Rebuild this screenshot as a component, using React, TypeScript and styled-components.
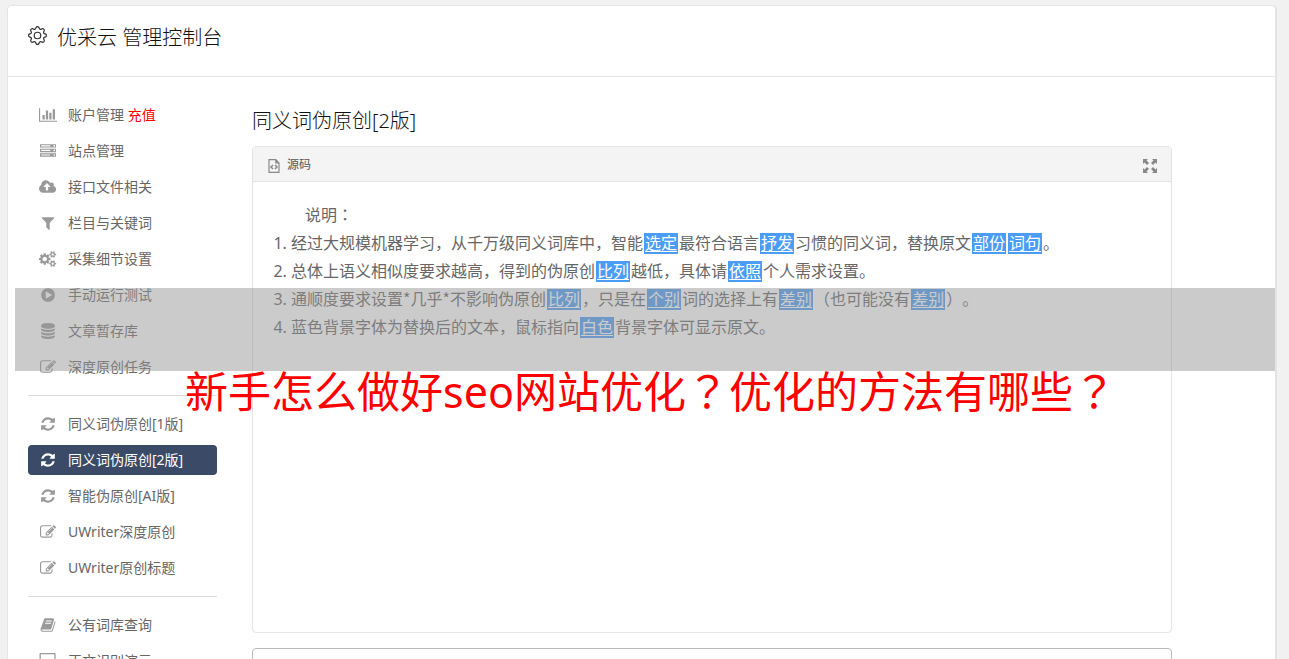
import React from "react";
import styled, { createGlobalStyle } from "styled-components";
import { BsGear } from "react-icons/bs";

const GlobalStyle = createGlobalStyle`
  * { box-sizing: border-box; }
  body {
    margin: 0;
    background: #f1f1f1;
    color: #666;
    font-family: "Noto Sans", "Noto Sans CJK SC", sans-serif;
    font-size: 14px;
    text-spacing-trim: space-all;
  }
`;

const Page = styled.div`
  position: relative;
  height: 100vh;
  overflow: hidden;
  padding: 5px 12px 0 7px;
`;

const Panel = styled.div`
  min-height: 100vh;
  background: #fff;
  border: 1px solid #e4e4e4;
  border-right-width: 2px;
  border-radius: 5px;
`;

const TopBar = styled.header`
  display: flex;
  align-items: flex-start;
  gap: 10px;
  height: 71px;
  padding: 18px 20px;
  border-bottom: 1px solid #e4e4e4;
  color: #333;

  svg {
    margin-top: 2px;
  }
`;

const Brand = styled.h1`
  margin: 0;
  font-size: 20px;
  line-height: 28px;
  font-weight: 300;
  color: #111;
`;

const Body = styled.div`
  display: flex;
  gap: 35px;
  padding: 23px 20px;
`;

const Sidebar = styled.nav`
  flex: 0 0 189px;
`;

const NavList = styled.ul`
  list-style: none;
  margin: 0;
  padding: 0;
  display: grid;
  gap: 6px;

  & + & {
    margin-top: 13px;
    padding-top: 13px;
    border-top: 1px solid #ddd;
  }
`;

const NavLink = styled.a<{ $active?: boolean }>`
  display: flex;
  height: 30px;
  line-height: 30px;
  border-radius: 4px;
  text-decoration: none;
  white-space: pre;
  color: ${(p) => (p.$active ? "#fff" : "#666")};
  background: ${(p) => (p.$active ? "#3b4a66" : "transparent")};

  svg {
    color: ${(p) => (p.$active ? "#fff" : "#999")};
  }
`;

const IconSlot = styled.span`
  display: flex;
  justify-content: center;
  align-items: center;
  width: 40px;
`;

const Recharge = styled.span`
  color: #f00;
`;

const Main = styled.main`
  flex: 1;
  min-width: 0;
  max-width: 920px;
`;

const Title = styled.h2`
  margin: 7px 0 11px;
  font-size: 20px;
  line-height: 28px;
  font-weight: 300;
  color: #111;
`;

const Editor = styled.section`
  height: 487px;
  border: 1px solid #e4e4e4;
  border-radius: 4px;
`;

const Toolbar = styled.div`
  display: flex;
  justify-content: space-between;
  align-items: center;
  height: 35px;
  padding: 0 14px;
  background: #f4f4f4;
  border-bottom: 1px solid #e4e4e4;
`;

const ToolButton = styled.button`
  display: flex;
  align-items: center;
  gap: 6px;
  padding: 0;
  border: 0;
  background: none;
  font: inherit;
  font-size: 12px;
  color: #555;

  svg {
    margin-top: 4px;
    color: #888;
  }
`;

const Content = styled.div`
  padding: 19px 20px;
  font-size: 16px;
  line-height: 28px;
`;

const Lead = styled.p`
  margin: 0;
  text-indent: 2em;
`;

const Rules = styled.ol`
  margin: 0;
  padding-left: 18px;
`;

const Swap = styled.span`
  display: inline-block;
  margin: 0 1px;
  padding: 0 1px;
  line-height: 21px;
  background: #4a9cf5;
  color: #fff;
  text-decoration: underline;
  text-decoration-thickness: 1px;
  text-underline-offset: 2px;
`;

/* Punctuation that sits in the middle of its full-width cell. */
const Centred = styled.span.attrs({ lang: "zh-TW" })`
  font-family: "Noto Sans CJK TC", sans-serif;
  line-height: 1;
`;

const ResultBox = styled.textarea`
  display: block;
  width: 100%;
  height: 120px;
  margin-top: 15px;
  border: 1px solid #bbb;
  border-radius: 4px;
  resize: none;
`;

const Band = styled.div`
  position: absolute;
  top: 288px;
  left: 15px;
  right: 14px;
  height: 83px;
  background: rgba(148, 148, 148, 0.49);
`;

const Headline = styled.p`
  position: absolute;
  top: 360px;
  left: 0;
  right: 0;
  margin: 0;
  padding-left: 12px;
  text-align: center;
  white-space: nowrap;
  font-size: 43px;
  line-height: 64px;
  color: #f00;
`;

const smallCog =
  "v140q0 16-149 31-12 27-30 52 51 113 51 138 0 4-4 7-122 71-124 71-8 0-46-47t-52-68q-20 2-30 2t-30-2q-14 21-52 68t-46 47q-2 0-124-71-4-3-4-7 0-25 51-138-18-25-30-52-149-15-149-31v-140q0-16 149-31 13-29 30-52-51-113-51-138 0-4 4-7 4-2 35-20t59-34 30-16q8 0 46 46.5t52 67.5q20-2 30-2t30 2q51-71 92-112l6-2q4 0 124 70 4 3 4 7 0 25-51 138 17 23 30 52 149 15 149 31z";
const led = "q0-40-28-68t-68-28-68 28-28 68 28 68 68 28 68-28 28-68z";
const disk =
  "q237 0 443-43t325-127v170q0 69-103 128t-280 93.5-385 34.5-385-34.5-280-93.5-103-128v-170q119 84 325 127t443 43z";

type Glyph = { x?: number; w?: number; d: string };

const glyphs: Record<string, Glyph> = {
  chart: {
    w: 2048,
    d: "M640 896v512h-256v-512h256zm384-512v1024h-256v-1024h256zm1024 1152v128h-2048v-1536h128v1408h1920zm-640-896v768h-256v-768h256zm384-384v1152h-256v-1152h256z",
  },
  server: {
    d: `M128 1408h1024v-128h-1024v128zM128 896h1024v-128h-1024v128zM1696 1344${led}M128 384h1024v-128h-1024v128zM1696 832${led}M1696 320${led}M1792 1152v384h-1792v-384h1792zM1792 640v384h-1792v-384h1792zM1792 128v384h-1792v-384h1792z`,
  },
  upload: {
    x: -64,
    w: 1920,
    d: "M1216 864q0-14-9-23l-352-352q-9-9-23-9t-23 9l-351 351q-10 12-10 24 0 14 9 23t23 9h224v352q0 13 9.5 22.5t22.5 9.5h192q13 0 22.5-9.5t9.5-22.5v-352h224q13 0 22.5-9.5t9.5-22.5zm640 288q0 159-112.5 271.5t-271.5 112.5h-1088q-185 0-316.5-131.5t-131.5-316.5q0-130 70-240t188-165q-2-30-2-43 0-212 150-362t362-150q156 0 285.5 87t188.5 231q71-62 166-62 106 0 181 75t75 181q0 76-41 138 130 31 213.5 135.5t83.5 238.5z",
  },
  filter: {
    d: "M1595 295q17 41-14 70l-493 493v742q0 42-39 59-13 5-25 5-27 0-45-19l-256-256q-19-19-19-45v-486l-493-493q-31-29-14-70 17-39 59-39h1280q42 0 59 39z",
  },
  cogs: {
    x: -64,
    w: 1920,
    d: `M832 896q0-106-75-181t-181-75-181 75-75 181 75 181 181 75 181-75 75-181zm768 512q0-52-38-90t-90-38-90 38-38 90q0 53 37.5 90.5t90.5 37.5 90.5-37.5 37.5-90.5zm0-1024q0-52-38-90t-90-38-90 38-38 90q0 53 37.5 90.5t90.5 37.5 90.5-37.5 37.5-90.5zm-384 421v185q0 10-7 19.5t-16 10.5l-155 24q-11 35-32 76 34 48 90 115 7 11 7 20 0 12-7 19-23 30-82.5 89.5t-78.5 59.5q-11 0-21-7l-115-90q-37 19-77 31-11 108-23 155-7 24-30 24h-186q-11 0-20-7.5t-10-17.5l-23-153q-34-10-75-31l-118 89q-7 7-20 7-11 0-21-8-144-133-144-160 0-9 7-19 10-14 41-53t47-61q-23-44-35-82l-152-24q-10-1-17-9.5t-7-19.5v-185q0-10 7-19.5t16-10.5l155-24q11-35 32-76-34-48-90-115-7-11-7-20 0-12 7-20 22-30 82-89t79-59q11 0 21 7l115 90q34-18 77-32 11-108 23-154 7-24 30-24h186q11 0 20 7.5t10 17.5l23 153q34 10 75 31l118-89q8-7 20-7 11 0 21 8 144 133 144 160 0 8-7 19-12 16-42 54t-45 60q23 48 34 82l152 23q10 2 17 10.5t7 19.5zM1856 1338${smallCog}M1856 314${smallCog}`,
  },
  play: {
    d: "M896 128q209 0 385.5 103t279.5 279.5 103 385.5-103 385.5-279.5 279.5-385.5 103-385.5-103-279.5-279.5-103-385.5 103-385.5 279.5-279.5 385.5-103zm384 823q32-18 32-55t-32-55l-544-320q-31-19-64-1-32 19-32 56v640q0 37 32 56 16 8 32 8 17 0 32-9z",
  },
  database: {
    d: `M896 768${disk}M896 1536${disk}M896 1152${disk}M896 0q208 0 385 34.5t280 93.5 103 128v128q0 69-103 128t-280 93.5-385 34.5-385-34.5-280-93.5-103-128v-128q0-69 103-128t280-93.5 385-34.5z`,
  },
  edit: {
    d: "M888 1184l116-116-152-152-116 116v56h96v96h56zm440-720q-16-16-33 1l-350 350q-17 17-1 33t33-1l350-350q17-17 1-33zm80 594v190q0 119-84.5 203.5t-203.5 84.5h-832q-119 0-203.5-84.5t-84.5-203.5v-832q0-119 84.5-203.5t203.5-84.5h832q63 0 117 25 15 7 18 23 3 17-9 29l-49 49q-14 14-32 8-23-6-45-6h-832q-66 0-113 47t-47 113v832q0 66 47 113t113 47h832q66 0 113-47t47-113v-126q0-13 9-22l64-64q15-15 35-7t20 29zm-96-738l288 288-672 672h-288v-288zm444 132l-92 92-288-288 92-92q28-28 68-28t68 28l152 152q28 28 28 68t-28 68z",
  },
  refresh: {
    d: "M1639 1056q0 5-1 7-64 268-268 434.5t-478 166.5q-146 0-282.5-55t-243.5-157l-129 129q-19 19-45 19t-45-19-19-45v-448q0-26 19-45t45-19h448q26 0 45 19t19 45-19 45l-137 137q71 66 161 102t187 36q134 0 250-65t186-179q11-17 53-117 8-23 30-23h192q13 0 22.5 9.5t9.5 22.5zm25-800v448q0 26-19 45t-45 19h-448q-26 0-45-19t-19-45 19-45l138-138q-148-137-349-137-134 0-250 65t-186 179q-11 17-53 117-8 23-30 23h-199q-13 0-22.5-9.5t-9.5-22.5v-7q65-268 270-434.5t480-166.5q146 0 284 55.5t245 156.5l130-129q19-19 45-19t45 19 19 45z",
  },
  book: {
    d: "M1703 478q40 57 18 129l-275 906q-19 64-76.5 107.5t-122.5 43.5h-923q-77 0-148.5-53.5t-99.5-131.5q-24-67-2-127 0-4 3-27t4-37q1-8-3-21.5t-3-19.5q2-11 8-21t16.5-23.5 16.5-23.5q23-38 45-91.5t30-91.5q3-10 .5-30t-.5-28q3-11 17-28t17-23q21-36 42-92t25-90q1-9-2.5-32t.5-28q4-13 22-30.5t22-22.5q19-26 42.5-84.5t27.5-96.5q1-8-3-25.5t-2-26.5q2-8 9-18t18-23 17-21q8-12 16.5-30.5t15-35 16-36 19.5-32 26.5-23.5 36-11.5 47.5 5.5l-1 3q38-9 51-9h761q74 0 114 56t18 130l-274 906q-36 119-71.5 153.5t-128.5 34.5h-869q-27 0-38 15-11 16-1 43 24 70 144 70h923q29 0 56-15.5t35-41.5l300-987q7-22 5-57 38 15 59 43zm-1064 2q-4 13 2 22.5t20 9.5h608q13 0 25.5-9.5t16.5-22.5l21-64q4-13-2-22.5t-20-9.5h-608q-13 0-25.5 9.5t-16.5 22.5zm-83 256q-4 13 2 22.5t20 9.5h608q13 0 25.5-9.5t16.5-22.5l21-64q4-13-2-22.5t-20-9.5h-608q-13 0-25.5 9.5t-16.5 22.5z",
  },
  laptop: {
    w: 1920,
    d: "M160 0h1600q100 0 100 100v1100q0 100-100 100h-1600q-100 0-100-100v-1100q0-100 100-100zm40 128v1044h1520v-1044zM0 1408h1920v96q0 60-100 60h-1720q-100 0-100-60z",
  },
};

const Icon = ({ name }: { name: string }) => {
  const { x = 0, w = 1792, d } = glyphs[name];
  return (
    <svg height="16" width={(w * 16) / 1792} viewBox={`${x} 0 ${w} 1792`} fill="currentColor" aria-hidden="true">
      <path d={d} />
    </svg>
  );
};

type Item = { icon: string; label: string; extra?: string; active?: boolean };

const groups: Item[][] = [
  [
    { icon: "chart", label: "账户管理", extra: "充值" },
    { icon: "server", label: "站点管理" },
    { icon: "upload", label: "接口文件相关" },
    { icon: "filter", label: "栏目与关键词" },
    { icon: "cogs", label: "采集细节设置" },
    { icon: "play", label: "手动运行测试" },
    { icon: "database", label: "文章暂存库" },
    { icon: "edit", label: "深度原创任务" },
  ],
  [
    { icon: "refresh", label: "同义词伪原创[1版]" },
    { icon: "refresh", label: "同义词伪原创[2版]", active: true },
    { icon: "refresh", label: "智能伪原创[AI版]" },
    { icon: "edit", label: "UWriter深度原创" },
    { icon: "edit", label: "UWriter原创标题" },
  ],
  [
    { icon: "book", label: "公有词库查询" },
    { icon: "laptop", label: "正文识别演示" },
  ],
];

export default function App() {
  return (
    <>
      <GlobalStyle />
      <Page lang="zh-CN">
        <Panel>
          <TopBar>
            <BsGear size={19} />
            <Brand>优采云 管理控制台</Brand>
          </TopBar>
          <Body>
            <Sidebar>
              {groups.map((items, i) => (
                <NavList key={i}>
                  {items.map((item) => (
                    <li key={item.label}>
                      <NavLink href="#" $active={item.active}>
                        <IconSlot>
                          <Icon name={item.icon} />
                        </IconSlot>
                        {item.label}
                        {item.extra && <Recharge> {item.extra}</Recharge>}
                      </NavLink>
                    </li>
                  ))}
                </NavList>
              ))}
            </Sidebar>
            <Main>
              <Title>同义词伪原创[2版]</Title>
              <Editor>
                <Toolbar>
                  <ToolButton type="button">
                    <svg width="14" height="14" viewBox="0 0 14 14" fill="none" stroke="currentColor" aria-hidden="true">
                      <path d="M2 .7h6.800l3.200 3.200v9.400H2zM8.800 .7v3.200H12" strokeWidth="1.200" />
                      <path d="M6 6 4 8 6 10M8 6 10 8 8 10" strokeWidth="1.500" />
                    </svg>
                    源码
                  </ToolButton>
                  <ToolButton type="button" aria-label="最大化">
                    <svg width="14" height="14" viewBox="0 0 14 14" fill="currentColor" aria-hidden="true">
                      <path d="M0 0h5L3.500 1.500 6 4 4 6 1.500 3.500 0 5zM14 0v5l-1.500-1.500L10 6 8 4l2.500-2.500L9 0zM0 14V9l1.500 1.500L4 8l2 2-2.500 2.500L5 14zM14 14H9l1.500-1.500L8 10l2-2 2.500 2.500L14 9z" />
                    </svg>
                  </ToolButton>
                </Toolbar>
                <Content>
                  <Lead>
                    说明<Centred>：</Centred>
                  </Lead>
                  <Rules>
                    <li>
                      经过大规模机器学习，从千万级同义词库中，智能<Swap>选定</Swap>最符合语言<Swap>抒发</Swap>
                      习惯的同义词，替换原文<Swap>部份</Swap><Swap>词句</Swap>。
                    </li>
                    <li>
                      总体上语义相似度要求越高，得到的伪原创<Swap>比列</Swap>越低，具体请<Swap>依照</Swap>个人需求设置。
                    </li>
                    <li>
                      通顺度要求设置<Centred>*</Centred>几乎<Centred>*</Centred>不影响伪原创<Swap>比列</Swap>，只是在
                      <Swap>个别</Swap>词的选择上有<Swap>差别</Swap>
                      <Centred>（</Centred>也可能没有<Swap>差别</Swap>
                      <Centred>）</Centred>。
                    </li>
                    <li>
                      蓝色背景字体为替换后的文本，鼠标指向<Swap>白色</Swap>背景字体可显示原文。
                    </li>
                  </Rules>
                </Content>
              </Editor>
              <ResultBox aria-label="结果" />
            </Main>
          </Body>
        </Panel>
        <Band />
        <Headline>
          新手怎么做好seo网站优化<Centred>？</Centred>优化的方法有哪些<Centred>？</Centred>
        </Headline>
      </Page>
    </>
  );
}
